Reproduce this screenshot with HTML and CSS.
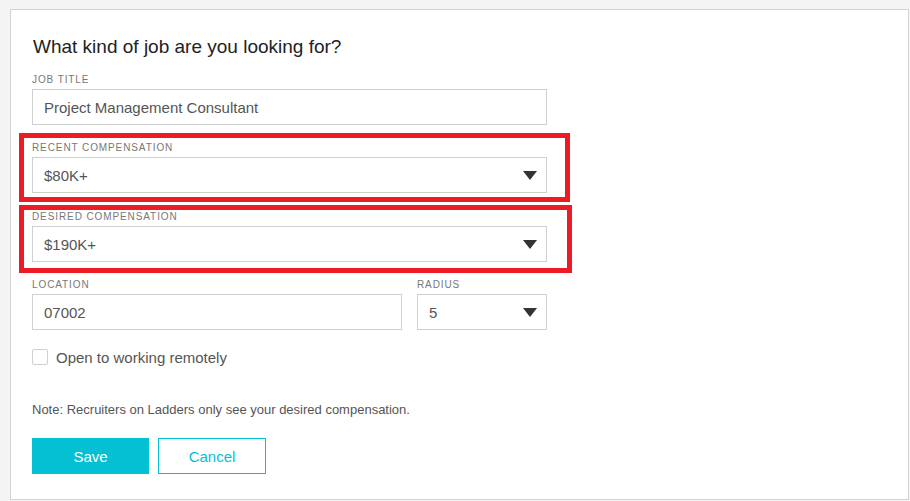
FILE: index.html
```html
<!DOCTYPE html>
<html lang="en">
<head>
<meta charset="utf-8">
<title>Job preferences</title>
<link rel="stylesheet" href="styles.css">
</head>
<body>
<div class="card">
  <form class="form">
    <h2 class="title">What kind of job are you looking for?</h2>

    <div class="field">
      <label class="label">JOB TITLE</label>
      <input class="input" type="text" value="Project Management Consultant">
    </div>

    <div class="field highlight hl-1">
      <label class="label">RECENT COMPENSATION</label>
      <div class="select"><span>$80K+</span><svg class="caret" width="14" height="9" viewBox="0 0 14 9"><path d="M0 0H14L7 9Z" fill="#333"/></svg></div>
    </div>

    <div class="field highlight hl-2">
      <label class="label">DESIRED COMPENSATION</label>
      <div class="select"><span>$190K+</span><svg class="caret" width="14" height="9" viewBox="0 0 14 9"><path d="M0 0H14L7 9Z" fill="#333"/></svg></div>
    </div>

    <div class="row">
      <div class="field loc">
        <label class="label">LOCATION</label>
        <input class="input" type="text" value="07002">
      </div>
      <div class="field radius">
        <label class="label">RADIUS</label>
        <div class="select"><span>5</span><svg class="caret" width="14" height="9" viewBox="0 0 14 9"><path d="M0 0H14L7 9Z" fill="#333"/></svg></div>
      </div>
    </div>

    <label class="check"><span class="box"></span><span>Open to working remotely</span></label>

    <p class="note">Note: Recruiters on Ladders only see your desired compensation.</p>

    <div class="actions">
      <button type="button" class="btn btn-primary">Save</button>
      <button type="button" class="btn btn-secondary">Cancel</button>
    </div>
  </form>
</div>
</body>
</html>
```

FILE: styles.css
```css
* { box-sizing: border-box; }
html, body { margin: 0; padding: 0; }
body {
  background: #f4f4f4;
  font-family: "Liberation Sans", Arial, sans-serif;
  color: #555;
  height: 501px;
  overflow: hidden;
}
.card {
  margin: 9px 1px 0 10px;
  height: 491px;
  background: #fff;
  border: 1px solid #d3d3d3;
  padding: 25px 0 0 21px;
}
.form {
  width: 515px;
}
.title {
  margin: 0 0 14px 1px;
  font-size: 19px;
  line-height: 24px;
  font-weight: normal;
  color: #222;
}
.field {
  position: relative;
  margin-bottom: 16px;
}
.hl-1 { margin-bottom: 17px; }
.label {
  display: block;
  font-size: 10px;
  line-height: 12px;
  padding-top: 1px;
  letter-spacing: 0.9px;
  color: #777;
  margin-bottom: 3px;
}
.input, .select {
  display: block;
  width: 100%;
  height: 36px;
  border: 1px solid #cfcfcf;
  border-radius: 0;
  background: #fff;
  padding: 0 11px;
  font-family: inherit;
  font-size: 15px;
  color: #555;
  outline: none;
}
.select {
  display: flex;
  align-items: center;
  justify-content: space-between;
  padding-right: 9px;
}
.caret { display: block; margin-top: 1px; }
.highlight::after {
  content: "";
  position: absolute;
  border: 5px solid #ed1c24;
  pointer-events: none;
}
.hl-1::after { top: -8px; left: -13px; right: -23px; bottom: -9px; }
.hl-2::after { top: -5px; left: -13px; right: -25px; bottom: -11px; }
.row {
  display: flex;
  gap: 15px;
}
.loc { width: 370px; }
.radius { width: 130px; }
.check {
  display: flex;
  align-items: center;
  gap: 8px;
  margin-top: 1px;
  height: 20px;
  font-size: 15px;
  color: #555;
}
.box {
  width: 16px;
  height: 16px;
  border: 1px solid #cfcfcf;
  border-radius: 2px;
  background: #fff;
}
.note {
  margin: 35px 0 20px;
  font-size: 13px;
  line-height: 16px;
  color: #555;
}
.actions {
  display: flex;
  gap: 9px;
}
.btn {
  height: 36px;
  font-family: inherit;
  font-size: 15px;
  border-radius: 0;
  cursor: pointer;
}
.btn-primary {
  width: 117px;
  background: #05bfd3;
  border: 1px solid #05bfd3;
  color: #fff;
}
.btn-secondary {
  width: 108px;
  background: #fff;
  border: 1px solid #05bfd3;
  color: #05bfd3;
}
```
